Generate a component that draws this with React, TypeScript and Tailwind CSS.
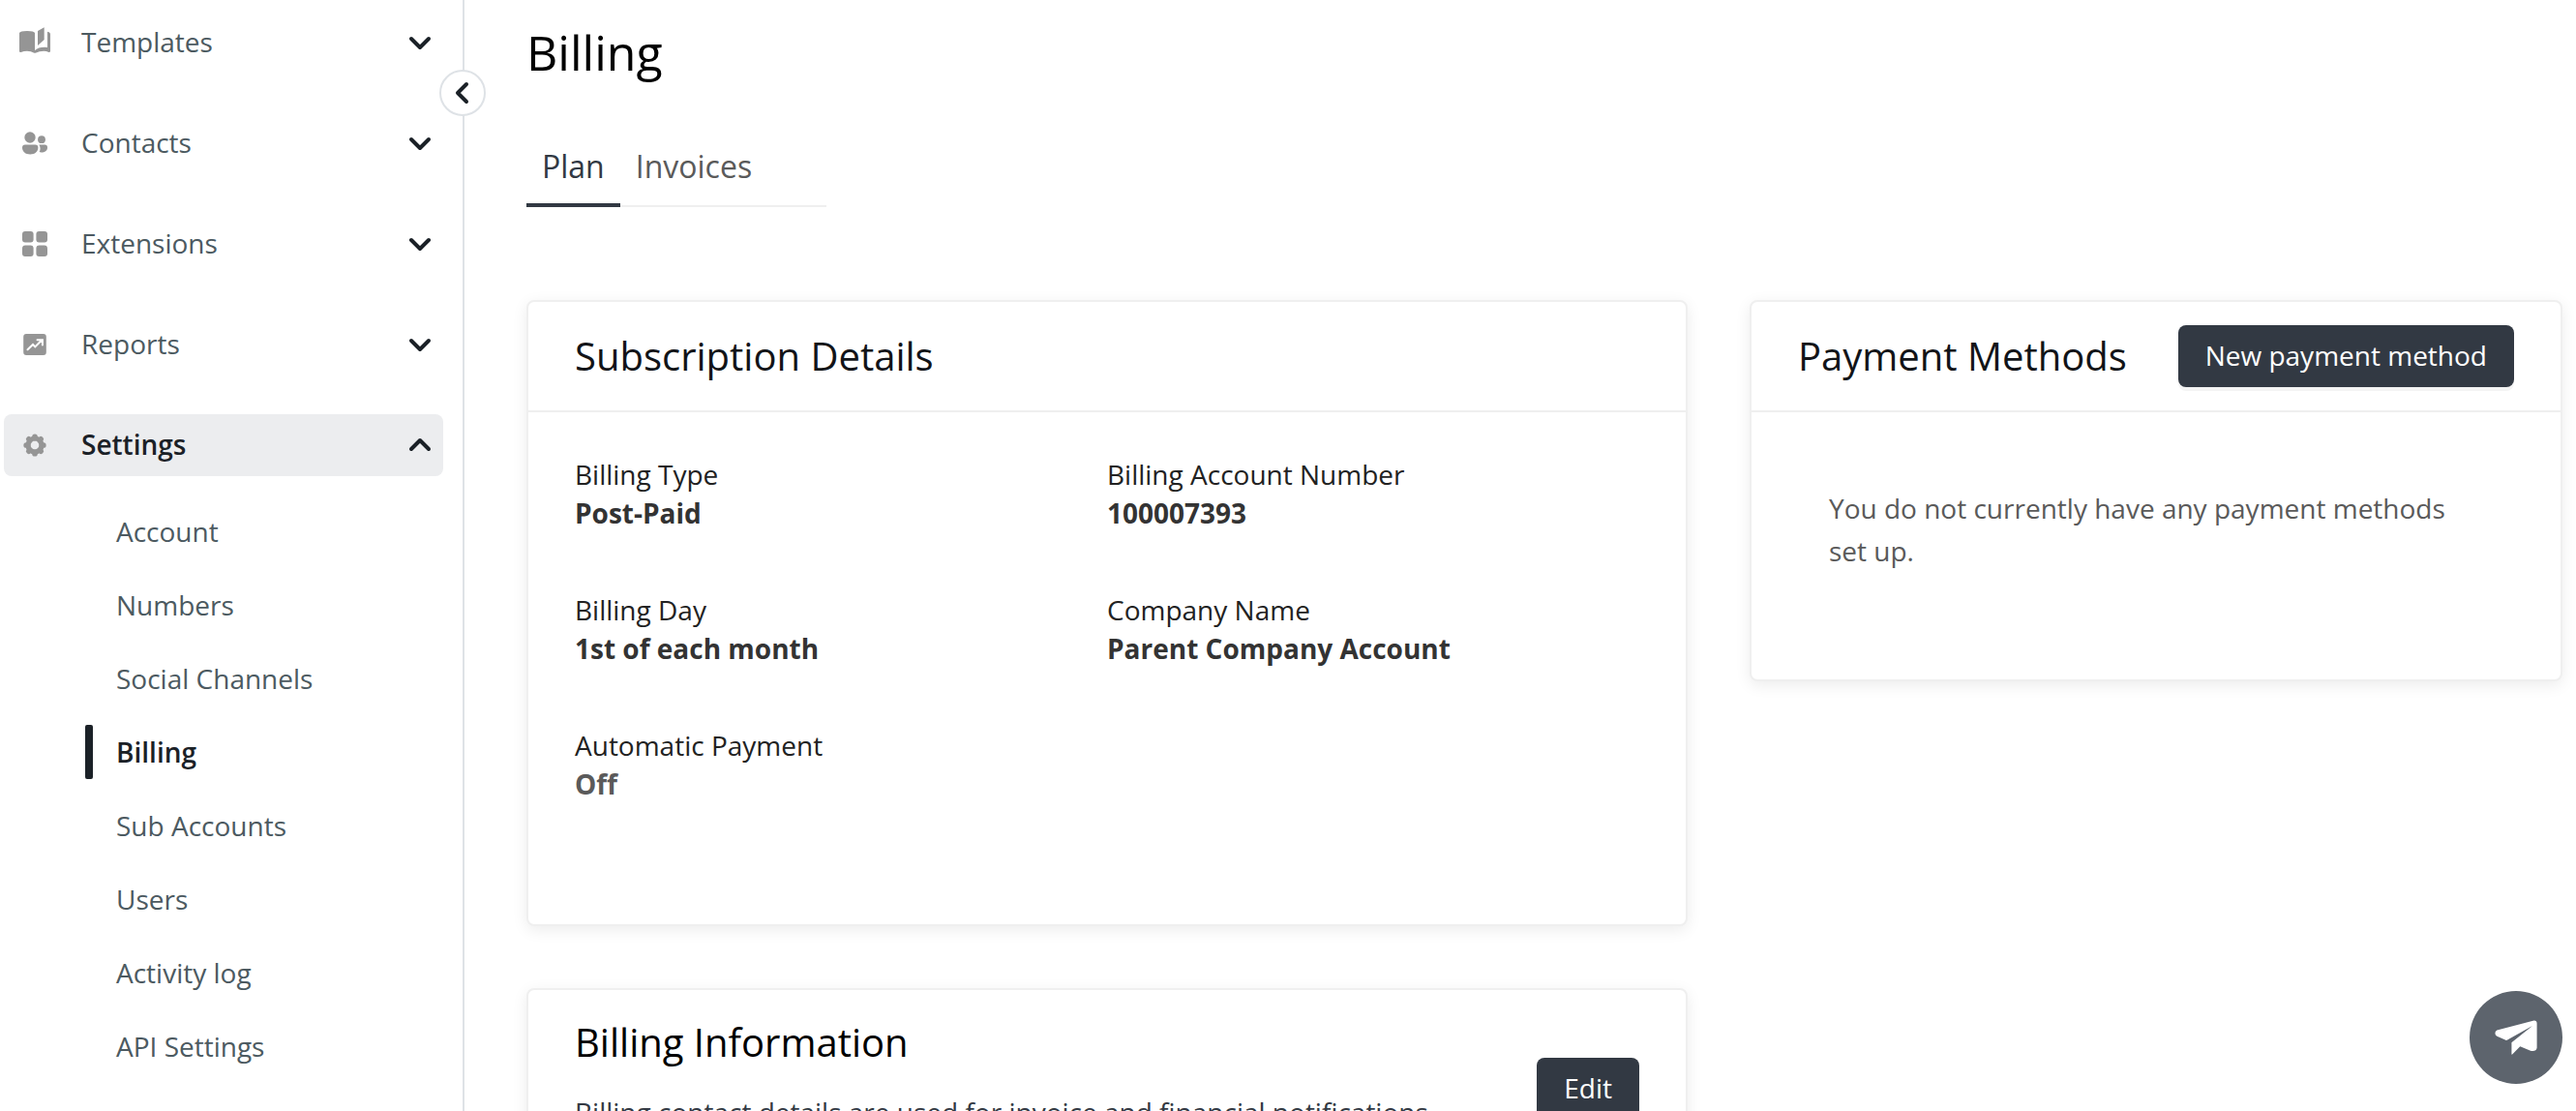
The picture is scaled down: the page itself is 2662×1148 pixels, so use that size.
import React, { useState } from 'react';

type IconProps = { className?: string };

// --- Icons ---
const TemplatesIcon: React.FC<IconProps> = ({ className }) => (
  <svg viewBox="0 0 96 96" className={className} fill="currentColor" aria-hidden="true">
    <path d="M0 18Q2 12 24 12Q46 12 48 18V72Q58 62 78 62Q84 62 87 63V14Q95 15 96 20V76Q94 79 91 78Q84 74 76 74Q62 74 50 80Q48 81 46 80Q36 74 24 74Q14 74 5 78Q1 79 0 76Z" />
    <path d="M57 12L77 1V39L57 57Z" />
  </svg>
);

const ContactsIcon: React.FC<IconProps> = ({ className }) => (
  <svg viewBox="0 0 32 32" className={className} fill="currentColor" aria-hidden="true">
    <circle cx="11" cy="10" r="5.7" />
    <circle cx="23" cy="12.2" r="3.9" />
    <path d="M6 17.6h10.4a3 3 0 0 1 3 3c0 4.2-3.3 7-8.2 7s-8.2-2.8-8.2-7a3 3 0 0 1 3-3z" />
    <path d="M20.4 17.6h5.8a2.8 2.8 0 0 1 2.8 2.8c0 3.2-2.8 5-6.2 5-.9 0-1.5-.1-2.2-.3 1.3-1.9 1.4-4.7-.2-7.5z" />
  </svg>
);

const ExtensionsIcon: React.FC<IconProps> = ({ className }) => (
  <svg viewBox="0 0 32 32" className={className} fill="currentColor" aria-hidden="true">
    <rect x="3" y="3" width="11.6" height="11.4" rx="3" />
    <rect x="17.4" y="3" width="11.6" height="11.4" rx="3" />
    <rect x="3" y="17.6" width="11.6" height="11.4" rx="3" />
    <rect x="17.4" y="17.6" width="11.6" height="11.4" rx="3" />
  </svg>
);

const ReportsIcon: React.FC<IconProps> = ({ className }) => (
  <svg viewBox="0 0 32 32" className={className} aria-hidden="true">
    <rect x="4.2" y="5" width="23.6" height="22" rx="3" fill="currentColor" />
    <path d="M8.5 21.2l5.5-5.2 2.3 2.4 7-7.2M18.5 11.2h5.4v5.4" fill="none" stroke="white" strokeWidth="2" strokeLinecap="round" />
  </svg>
);

const SettingsIcon: React.FC<IconProps> = ({ className }) => (
  <svg viewBox="0 0 32 32" className={className} fill="currentColor" aria-hidden="true">
    <circle cx="16" cy="16" r="7" fill="none" stroke="currentColor" strokeWidth="5.2" />
    {[0, 45, 90, 135, 180, 225, 270, 315].map((angle) => (
      <rect key={angle} x="13.2" y="4.4" width="5.6" height="7" rx="2.6" transform={`rotate(${angle} 16 16)`} />
    ))}
  </svg>
);

const Chevron: React.FC<{ open?: boolean }> = ({ open }) => (
  <svg viewBox="0 0 24 16" className="h-4 w-6" fill="none" stroke="currentColor" strokeWidth="4" strokeLinecap="round" strokeLinejoin="round" aria-hidden="true">
    <path d={open ? 'M3 12L12 3L21 12' : 'M3 4L12 13L21 4'} />
  </svg>
);

const PlaneIcon: React.FC<IconProps> = ({ className }) => (
  <svg viewBox="0 0 134 110" className={className} fill="currentColor" aria-hidden="true">
    <path d="M7 32L121 2Q133 0 133 11V88Q131 98 120 98Q115 98 111 96L80 83L56 108Q53 111 53 107V71L119 18L40 63Q36 65 33 63L7 51Q1 48 1 42Q1 35 7 32Z" />
  </svg>
);

// --- Data ---
const menu = [
  { label: 'Templates', Icon: TemplatesIcon },
  { label: 'Contacts', Icon: ContactsIcon },
  { label: 'Extensions', Icon: ExtensionsIcon },
  { label: 'Reports', Icon: ReportsIcon },
  { label: 'Settings', Icon: SettingsIcon },
];

const settingsLinks = ['Account', 'Numbers', 'Social Channels', 'Billing', 'Sub Accounts', 'Users', 'Activity log', 'API Settings'];

const details = [
  { label: 'Billing Type', value: 'Post-Paid' },
  { label: 'Billing Account Number', value: '100007393' },
  { label: 'Billing Day', value: '1st of each month' },
  { label: 'Company Name', value: 'Parent Company Account' },
  { label: 'Automatic Payment', value: 'Off', muted: true },
];

// --- Building blocks ---
const Card: React.FC<{ children: React.ReactNode }> = ({ children }) => (
  <section className="rounded-lg border-2 border-[#efefef] bg-white shadow-[0_4px_16px_rgba(0,0,0,0.08)]">{children}</section>
);

const Button: React.FC<{ children: React.ReactNode }> = ({ children }) => (
  <button type="button" className="h-16 shrink-0 rounded-lg bg-[#323943] px-7 pb-0.5 text-[28px] whitespace-nowrap text-white shadow-[0_4px_0_rgba(0,0,0,0.045)]">
    {children}
  </button>
);

const Sidebar: React.FC = () => {
  const [openMenu, setOpenMenu] = useState('Settings');

  return (
    <aside className="relative w-[480px] shrink-0 border-r-2 border-[#dee2e6] pt-3 pr-5 pl-1">
      <nav className="flex flex-col gap-10 text-[28px] text-[#4c5a61]">
        {menu.map(({ label, Icon }) => {
          const open = openMenu === label;
          return (
            <div key={label}>
              <button
                type="button"
                aria-expanded={open}
                onClick={() => setOpenMenu(open ? '' : label)}
                className={`flex h-16 w-full items-center rounded-lg pr-3 pl-4 ${open ? 'bg-[#ecedef] font-semibold text-[#1b2127]' : ''}`}
              >
                <Icon className="mr-8 size-8 text-[#959595]" />
                <span className="flex-1 pb-0.5 text-left">{label}</span>
                <span className="text-[#1b2127]">
                  <Chevron open={open} />
                </span>
              </button>
              {open && label === 'Settings' && (
                <ul className="mt-[29px] flex flex-col gap-5 pl-[84px]">
                  {settingsLinks.map((link) => {
                    const active = link === 'Billing';
                    return (
                      <li key={link}>
                        <a href="#" aria-current={active ? 'page' : undefined} className={`flex h-14 items-center gap-6 ${active ? 'font-semibold text-[#1b2127]' : ''}`}>
                          <span className={`h-14 w-2 rounded-xs ${active ? 'bg-[#1b2127]' : ''}`} />
                          {link}
                        </a>
                      </li>
                    );
                  })}
                </ul>
              )}
            </div>
          );
        })}
      </nav>

      {/* collapse toggle sits on top of the divider */}
      <button type="button" aria-label="Collapse menu" className="absolute top-[72px] -right-6 flex size-12 items-center justify-center rounded-full border-2 border-[#dee2e6] bg-white text-[#1b2127]">
        <svg viewBox="0 0 24 24" className="size-6" fill="none" stroke="currentColor" strokeWidth="4" strokeLinecap="round" strokeLinejoin="round" aria-hidden="true">
          <path d="M16 3L7 12L16 21" />
        </svg>
      </button>
    </aside>
  );
};

const App: React.FC = () => {
  const [tab, setTab] = useState('Plan');

  return (
    <div className="flex h-screen overflow-hidden bg-white font-['Open_Sans',sans-serif]">
      <Sidebar />

      <main className="min-w-0 flex-1 pt-[22px] pr-[14px] pl-16">
        <h1 className="text-[50px] leading-[64px] font-medium text-black">Billing</h1>

        {/* --- Tabs --- */}
        <div role="tablist" className="mt-16 flex w-[310px] border-b-2 border-[#efefef] text-[32px] leading-[44px]">
          {['Plan', 'Invoices'].map((name) => (
            <button
              key={name}
              type="button"
              role="tab"
              aria-selected={tab === name}
              onClick={() => setTab(name)}
              className={`-mb-[2px] border-b-4 px-4 pb-4 ${tab === name ? 'border-[#323943] font-medium text-[#323943]' : 'border-transparent text-[#5a5a5a]'}`}
            >
              {name}
            </button>
          ))}
        </div>

        <div className="mt-24 grid grid-cols-[10fr_7fr] items-start gap-16">
          <div className="flex flex-col gap-16">
            {/* --- Subscription details --- */}
            <Card>
              <header className="border-b-2 border-[#efefef] px-12 py-6">
                <h2 className="text-[40px] leading-[64px] font-medium text-[#121418]">Subscription Details</h2>
              </header>
              <dl className="grid grid-cols-2 gap-y-15 px-12 pt-11 pb-[125px] text-[28px] leading-[40px]">
                {details.map(({ label, value, muted }) => (
                  <div key={label}>
                    <dt className="text-[#222222]">{label}</dt>
                    <dd className={`font-bold ${muted ? 'text-[#5a5a5a]' : 'text-[#333333]'}`}>{value}</dd>
                  </div>
                ))}
              </dl>
            </Card>

            {/* --- Billing information --- */}
            <Card>
              <div className="flex items-center justify-between px-12 pt-[26px] pb-12">
                <div className="pb-8">
                  <h2 className="text-[40px] leading-[56px] font-medium text-black">Billing Information</h2>
                  <p className="mt-6 text-[28px] leading-[40px] text-[#323943]">Billing contact details are used for invoice and financial notifications</p>
                </div>
                <Button>Edit</Button>
              </div>
            </Card>
          </div>

          {/* --- Payment methods --- */}
          <Card>
            <header className="flex items-center justify-between border-b-2 border-[#efefef] px-12 py-6">
              <h2 className="text-[40px] leading-[64px] font-medium text-[#121418]">Payment Methods</h2>
              <Button>New payment method</Button>
            </header>
            <p className="px-20 pt-[77px] pb-[111px] text-[28px] leading-[44px] text-[#5a5a5a]">You do not currently have any payment methods set up.</p>
          </Card>
        </div>
      </main>

      {/* --- Chat launcher --- */}
      <button type="button" aria-label="Send a message" className="fixed right-[14px] bottom-7 flex size-24 items-center justify-center rounded-full bg-[#5d646d] text-white">
        <PlaneIcon className="h-9 w-11" />
      </button>
    </div>
  );
};

export default App;
